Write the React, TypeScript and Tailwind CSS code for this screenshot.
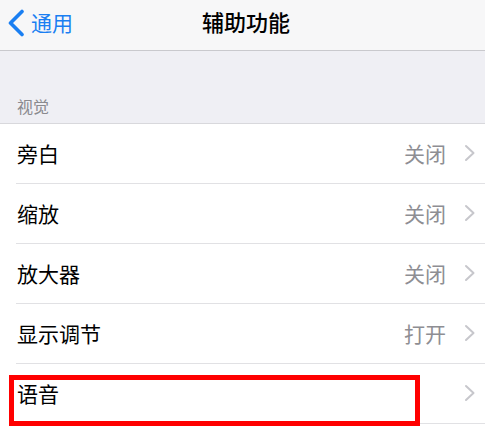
import React from "react";

const rows = [
  { label: "旁白", value: "关闭" },
  { label: "缩放", value: "关闭" },
  { label: "放大器", value: "关闭" },
  { label: "显示调节", value: "打开" },
  { label: "语音", value: "" },
];

function Chevron({ className }: { className?: string }) {
  return (
    <svg viewBox="0 0 12 18" className={className} fill="none">
      <path d="M2 2l7.5 7L2 16" stroke="currentColor" strokeWidth="2" strokeLinecap="round" strokeLinejoin="round" />
    </svg>
  );
}

export default function App() {
  return (
    <div
      className="w-[485px] h-[441px] overflow-hidden bg-white"
      style={{ fontFamily: '"Noto Sans CJK SC", "Noto Sans", sans-serif' }}
    >
      {/* nav bar */}
      <div className="relative h-[51px] bg-[#f7f7f8] border-b border-[#c9c9cd] flex items-center">
        <div className="flex items-center pl-[7px] text-[#1a7ff2]">
          <svg viewBox="0 0 18 28" className="w-[18px] h-[28px] mt-[-4px]" fill="none">
            <path d="M15 2.5L3.5 14 15 25.5" stroke="currentColor" strokeWidth="3.6" strokeLinecap="round" strokeLinejoin="round" />
          </svg>
          <span className="ml-[6px] text-[21px] leading-none mt-[-5px]">通用</span>
        </div>
        <div className="absolute inset-0 flex items-center justify-center pl-[7px] pointer-events-none">
          <span className="text-[22px] font-medium leading-none text-black mt-[-8px]">辅助功能</span>
        </div>
      </div>

      {/* section header */}
      <div className="h-[73px] bg-[#efeff4] border-b border-[#d8d8dc] flex items-end pl-[17px] pb-[9px]">
        <span className="text-[16px] leading-none text-[#8a8a8f]">视觉</span>
      </div>

      {/* rows */}
      <div className="bg-white">
        {rows.map((r, i) => (
          <div key={i} className="relative pl-[16px]">
            <div className="h-[60px] flex items-center border-b border-[#e1e1e4] pr-[9px]">
              <span className="flex-1 text-[21px] leading-none text-black pl-px mt-[-1px]">{r.label}</span>
              {r.value && (
                <span className="text-[21px] leading-none text-[#8e8e93] mr-[18px] mt-[-1px]">{r.value}</span>
              )}
              <Chevron className="w-[12px] h-[18px] text-[#c7c7cc] mt-[-1px]" />
            </div>
            {i === 4 && (
              <div className="absolute left-[9px] top-[11px] w-[411px] h-[51px] border-[5px] border-[#ff0000] pointer-events-none" />
            )}
          </div>
        ))}
      </div>
    </div>
  );
}
